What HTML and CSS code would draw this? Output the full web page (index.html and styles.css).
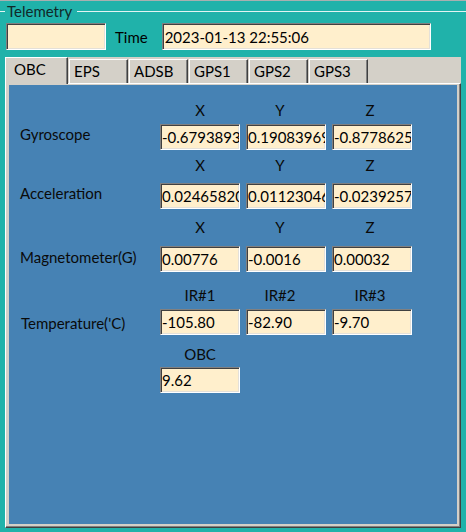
FILE: index.html
```html
<!DOCTYPE html>
<html>
  <head>
    <link rel="stylesheet" href="styles.css">
  </head>
  <body>
    <div class="window">
      <div class="group-title">
        <span class="group-line group-line--short"></span>
        <span class="group-text">Telemetry</span>
        <span class="group-line"></span>
      </div>

      <div class="time-row">
        <input class="field field--status" readonly value="" />
        <span class="time-label">Time</span>
        <input class="field field--time" readonly value="2023-01-13 22:55:06" />
      </div>

      <div class="tabctl">
        <div class="tabstrip">
          <div class="tab tab--active">OBC</div>
          <div class="tab">EPS</div>
          <div class="tab">ADSB</div>
          <div class="tab">GPS1</div>
          <div class="tab">GPS2</div>
          <div class="tab">GPS3</div>
        </div>

        <div class="page">
          <div class="page-body">
            <div class="sensor sensor--gyro">
              <div class="axis-head"><span></span><span>X</span><span>Y</span><span>Z</span></div>
              <div class="axis-row">
                <span class="sensor-name">Gyroscope</span>
                <input class="field" readonly value="-0.67938931" />
                <input class="field" readonly value="0.190839694" />
                <input class="field" readonly value="-0.87786259" />
              </div>
            </div>

            <div class="sensor sensor--accel">
              <div class="axis-head"><span></span><span>X</span><span>Y</span><span>Z</span></div>
              <div class="axis-row">
                <span class="sensor-name">Acceleration</span>
                <input class="field" readonly value="0.024658203" />
                <input class="field" readonly value="0.011230469" />
                <input class="field" readonly value="-0.023925781" />
              </div>
            </div>

            <div class="sensor sensor--mag">
              <div class="axis-head"><span></span><span>X</span><span>Y</span><span>Z</span></div>
              <div class="axis-row">
                <span class="sensor-name">Magnetometer(G)</span>
                <input class="field" readonly value="0.00776" />
                <input class="field" readonly value="-0.0016" />
                <input class="field" readonly value="0.00032" />
              </div>
            </div>

            <div class="sensor sensor--temp">
              <div class="axis-head"><span></span><span>IR#1</span><span>IR#2</span><span>IR#3</span></div>
              <div class="axis-row">
                <span class="sensor-name">Temperature('C)</span>
                <input class="field" readonly value="-105.80" />
                <input class="field" readonly value="-82.90" />
                <input class="field" readonly value="-9.70" />
              </div>
            </div>

            <div class="sensor sensor--obc">
              <div class="axis-head"><span></span><span>OBC</span></div>
              <div class="axis-row">
                <span></span>
                <input class="field" readonly value="9.62" />
              </div>
            </div>
          </div>
        </div>
      </div>
    </div>
  </body>
</html>
```

FILE: styles.css
```css
body {
  margin: 0;
  font-family: Lato, "Open Sans", sans-serif;
  font-size: 15px;
  color: #000;
}

.window {
  width: 466px;
  height: 532px;
  box-sizing: border-box;
  border-top: 1px solid #a8b0b0;
  background-color: #20b2aa;
  overflow: hidden;
}

/* group box caption with the etched line running through it */
.group-title {
  display: flex;
  align-items: center;
  height: 20px;
}

.group-line {
  flex: 1;
  height: 1px;
  background-color: #e2f4f3;
}

.group-line--short {
  flex: 0 0 5px;
}

.group-text {
  padding: 0 5px 0 2px;
  color: #102828;
  line-height: 20px;
}

.time-row {
  display: flex;
  align-items: center;
  margin-top: 2px;
  padding-left: 6px;
  height: 27px;
}

.time-label {
  margin-left: 9px;
  margin-right: 14px;
}

/* sunken 3D text box */
.field {
  box-sizing: border-box;
  width: 80px;
  height: 26px;
  margin: 0;
  padding: 0 0 0 1px;
  border: 1px solid;
  border-color: #808080 #fff #fff #808080;
  box-shadow: inset 1px 1px #404040, inset -1px -1px #e4e0d8;
  background-color: #ffefcc;
  font-family: inherit;
  font-size: 15px;
  color: #000;
  outline: none;
}

.field--status {
  width: 100px;
  height: 27px;
}

.field--time {
  width: 269px;
  height: 27px;
  padding-left: 2px;
}

/* tab control */
.tabctl {
  margin: 7px 5px 0;
  background-color: #d4d0c8;
}

.tabstrip {
  display: flex;
  align-items: flex-start;
  height: 26px;
}

.tab {
  box-sizing: border-box;
  width: 59px;
  height: 24px;
  margin-top: 2px;
  margin-right: 1px;
  padding-left: 4px;
  border-top: 1px solid #fff;
  border-left: 1px solid #fff;
  border-right: 1px solid #404040;
  box-shadow: inset -1px 0 #808080;
  line-height: 22px;
  color: #000;
}

.tab--active {
  position: relative;
  z-index: 1;
  width: 63px;
  height: 27px;
  margin-top: 0;
  padding-left: 8px;
  background-color: #d4d0c8;
  line-height: 22px;
}

.page {
  box-sizing: border-box;
  height: 445px;
  padding: 1px 3px 3px 3px;
  border: 1px solid;
  border-color: #fff #404040 #404040 #fff;
  box-shadow: inset -1px -1px #808080;
}

.page-body {
  height: 100%;
  padding: 16px 0 0 11px;
  box-sizing: border-box;
  background-color: #4682b4;
}

.axis-head {
  display: grid;
  grid-template-columns: 140px 80px 80px 100px;
  line-height: 18px;
  text-align: center;
  color: #0a0a0a;
}

.axis-row {
  display: grid;
  grid-template-columns: 134px 80px 80px 80px;
  column-gap: 6px;
  align-items: center;
}

.sensor-name {
  padding-bottom: 6px;
  color: #0a0a0a;
  line-height: 18px;
}

.sensor--gyro .axis-head {
  margin-bottom: 5px;
}

.sensor--accel {
  margin-top: 6px;
}

.sensor--accel .axis-head {
  margin-bottom: 9px;
}

.sensor--mag {
  margin-top: 9px;
}

.sensor--mag .axis-head {
  margin-bottom: 10px;
}

.sensor--mag .sensor-name {
  padding-bottom: 4px;
}

.sensor--temp {
  margin-top: 14px;
}

.sensor--temp .axis-head {
  margin-bottom: 5px;
}

.sensor--temp .sensor-name {
  padding-bottom: 0;
  padding-top: 1px;
  padding-left: 1px;
}

.sensor--obc {
  margin-top: 10px;
}

.sensor--obc .axis-head {
  margin-bottom: 4px;
}
```
